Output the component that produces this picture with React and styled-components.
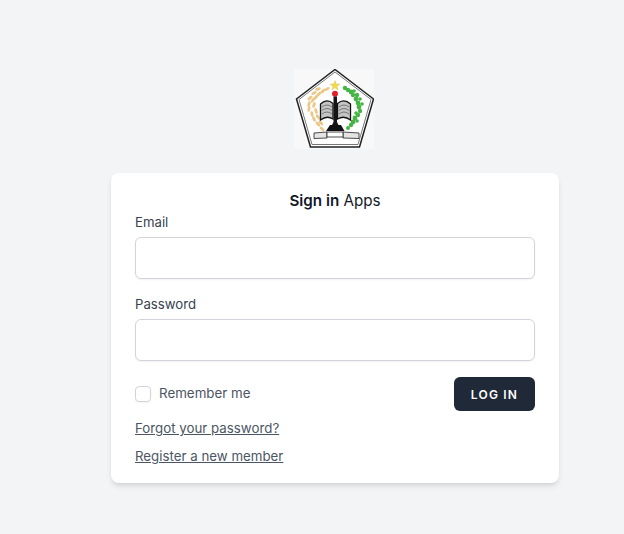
import styled, { createGlobalStyle } from "styled-components";

const GlobalStyle = createGlobalStyle`
  html, body {
    margin: 0;
    height: 100%;
    overflow: hidden;
    background: #f3f4f6;
  }
  * {
    box-sizing: border-box;
  }
`;

// wheat leaves on the left of the crest: x, y, angle
const WHEAT = [
  [33, 20, -30], [29, 22, -40], [25, 25, -45], [22, 28, -50], [19, 31, -55],
  [24, 20, -20], [20, 24, -30], [16, 29, -40], [15, 35, -70], [15, 40, -80],
  [20, 36, -70], [18, 45, 80], [22, 42, 70], [20, 50, 60], [24, 48, 55], [24, 55, 50], [27, 54, 45], [28, 60, 45],
];

// round leaves on the right of the crest: x, y, radius
const LEAVES = [
  [51, 19, 2.2], [54, 21, 2.2], [57, 23, 2.4], [60, 22, 1.8], [59, 26, 2.2], [63, 26, 2.2],
  [62, 30, 2.4], [66, 30, 1.8], [64, 34, 2.4], [68, 35, 1.8], [65, 38, 2.4], [66, 42, 2.2],
  [62, 44, 1.8], [64, 46, 2.2], [61, 49, 2.4], [63, 52, 1.8], [59, 53, 2.4], [57, 56, 2.2], [54, 59, 2],
];

const Logo = () => (
  <S.LogoBox>
    <svg width="80" height="80" viewBox="0 0 80 80">
      <rect width="80" height="80" fill="#f8f8f8" />
      <path d="M41 0.500 L79.500 30 L65.500 78 L16.500 78 L2.500 30 Z" fill="#fff" stroke="#222" strokeWidth="1.500" />
      <path d="M41 3 L77 30.500 L64 75.500 L18 75.500 L5 30.500 Z" fill="none" stroke="#555" strokeWidth="0.800" />
      {WHEAT.map(([x, y, a]) => (
        <ellipse key={`${x}-${y}`} cx={x} cy={y} rx="3" ry="1.500" fill="#ecc888" transform={`rotate(${a} ${x} ${y})`} />
      ))}
      {LEAVES.map(([x, y, r]) => (
        <circle key={`${x}-${y}`} cx={x} cy={y} r={r} fill="#47b545" />
      ))}
      <path d="M41 11.500 L42.300 15 L46 15 L43 17.300 L44.100 21 L41 18.800 L37.900 21 L39 17.300 L36 15 L39.700 15 Z" fill="#f3dc45" stroke="#c9a93a" strokeWidth="0.300" />
      <circle cx="41" cy="24.700" r="3" fill="#e0202a" />
      <path d="M26.500 35 Q33 29 39 34.500 L39 50 Q33 46 26.500 51 Z" fill="#c4c4c4" stroke="#111" strokeWidth="1.300" />
      <path d="M56.500 35 Q50 29 43.500 34.500 L43.500 50 Q50 46 56.500 51 Z" fill="#c4c4c4" stroke="#111" strokeWidth="1.300" />
      <path d="M28 38 Q33 34 38 38 M28 41.500 Q33 37.500 38 41.500 M28 45 Q33 41 38 45 M45 38 Q50 34 55 38 M45 41.500 Q50 37.500 55 41.500 M45 45 Q50 41 55 45" fill="none" stroke="#555" strokeWidth="0.700" />
      <path d="M39.500 27.500 L43 27.500 L43 53 L44.500 56 L38 56 L39.500 53 Z" fill="#151515" />
      <path d="M36 56 L47 56 L50.500 62 L32 62 Z" fill="#111" />
      <path d="M20 64 L33 63 L33 69 L20 69.500 Z M65 64 L49 63 L49 69 L65 69.500 Z" fill="#e4e4e4" stroke="#222" strokeWidth="0.800" />
      <rect x="33" y="63" width="16" height="5" fill="#fff" stroke="#222" strokeWidth="0.800" />
    </svg>
  </S.LogoBox>
);

export default function App() {
  return (
    <S.Page>
      <GlobalStyle />
      <Logo />
      <S.Card>
        <S.Title>
          <strong>Sign in</strong> Apps
        </S.Title>
        <S.Form onSubmit={(e) => e.preventDefault()}>
          <S.Field>
            <S.Label htmlFor="email">Email</S.Label>
            <S.Input id="email" type="email" />
          </S.Field>
          <S.Field $top={16}>
            <S.Label htmlFor="password">Password</S.Label>
            <S.Input id="password" type="password" />
          </S.Field>
          <S.ActionRow>
            <S.Remember>
              <S.Checkbox type="checkbox" />
              <span>Remember me</span>
            </S.Remember>
            <S.Button type="submit">Log in</S.Button>
          </S.ActionRow>
          <S.Links>
            <S.Link href="#">Forgot your password?</S.Link>
            <S.Link href="#">Register a new member</S.Link>
          </S.Links>
        </S.Form>
      </S.Card>
    </S.Page>
  );
}

const S = {
  Page: styled.div`
    display: flex;
    flex-direction: column;
    align-items: center;
    padding: 69px 0 0 46px;
    font-family: Inter, "Liberation Sans", sans-serif;
    color: #111827;
  `,
  LogoBox: styled.div`
    width: 80px;
    height: 80px;
    line-height: 0;
    margin-left: -2px;
  `,
  Card: styled.div`
    width: 448px;
    height: 310px;
    margin-top: 24px;
    padding: 16px 24px;
    background: #fff;
    border-radius: 8px;
    box-shadow: 0 4px 6px -1px rgba(0, 0, 0, 0.1), 0 2px 4px -2px rgba(0, 0, 0, 0.1);
  `,
  Title: styled.div`
    font-size: 15.200px;
    line-height: 24px;
    text-align: center;

    strong {
      font-weight: 600;
    }
  `,
  Form: styled.form`
    display: flex;
    flex-direction: column;
  `,
  Field: styled.div`
    display: flex;
    flex-direction: column;
    margin-top: ${(p) => p.$top || 0}px;
  `,
  Label: styled.label`
    font-size: 13.200px;
    line-height: 18px;
    font-weight: 400;
    color: #374151;
    margin-bottom: 6px;
  `,
  Input: styled.input`
    width: 100%;
    height: 42px;
    padding: 8px 12px;
    background: #fff;
    border: 1px solid #d1d5db;
    border-radius: 6px;
    box-shadow: 0 1px 2px rgba(0, 0, 0, 0.05);
    outline: none;
  `,
  ActionRow: styled.div`
    display: flex;
    justify-content: space-between;
    align-items: center;
    margin-top: 16px;
  `,
  Remember: styled.label`
    display: flex;
    align-items: center;
    gap: 8px;
    font-size: 13.350px;
    line-height: 18px;
    color: #4b5563;

    span {
      margin-bottom: 2px;
    }
  `,
  Checkbox: styled.input`
    appearance: none;
    width: 16px;
    height: 16px;
    margin: 0;
    background: #fff;
    border: 1px solid #d1d5db;
    border-radius: 4px;
    box-shadow: 0 1px 2px rgba(0, 0, 0, 0.05);
  `,
  Button: styled.button`
    width: 81px;
    height: 34px;
    padding: 0;
    background: #1f2937;
    border: 1px solid transparent;
    border-radius: 6px;
    color: #fff;
    font-family: inherit;
    font-size: 12px;
    font-weight: 600;
    letter-spacing: 1.200px;
    text-transform: uppercase;
  `,
  Links: styled.div`
    display: flex;
    flex-direction: column;
    align-items: flex-start;
    gap: 8px;
    margin-top: 7px;
  `,
  Link: styled.a`
    font-size: 13.300px;
    line-height: 20px;
    color: #4b5563;
    text-decoration: underline;
  `,
};
